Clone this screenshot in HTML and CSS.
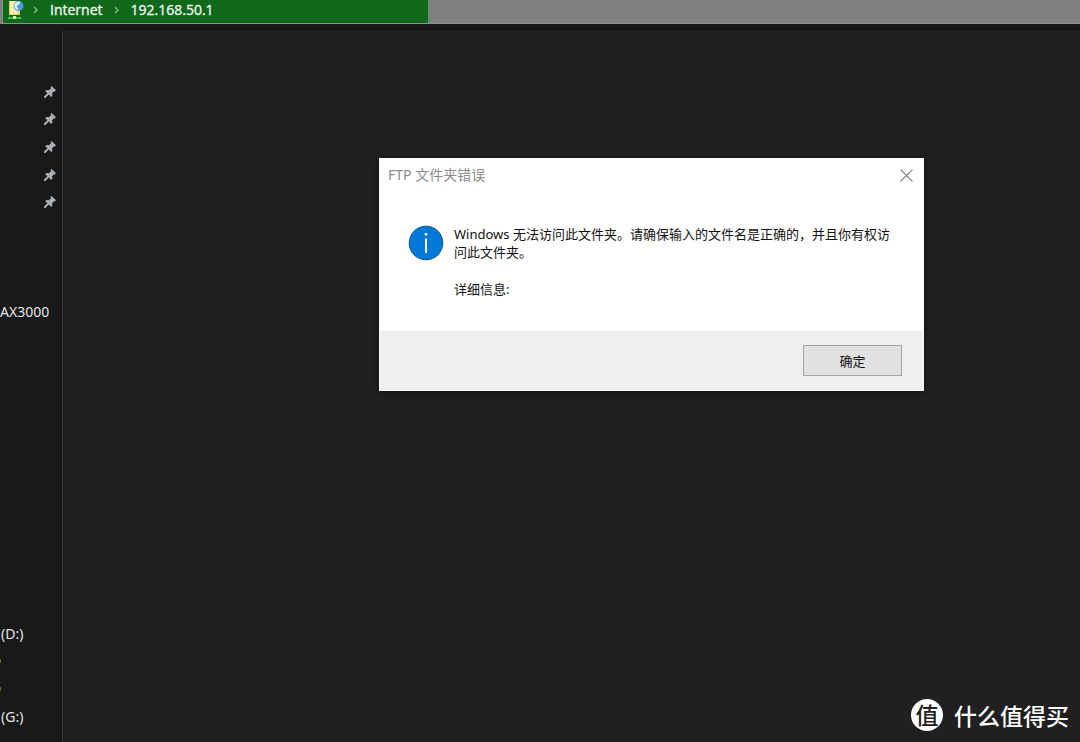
FILE: index.html
```html
<!DOCTYPE html>
<html lang="zh-CN">
<head>
<meta charset="utf-8">
<title>FTP 文件夹错误</title>
<link rel="stylesheet" href="styles.css">
</head>
<body>
<svg class="defs" aria-hidden="true">
  <symbol id="pin" viewBox="0 0 14 14">
    <path d="M8.6 1 13 5.2 11.8 6.4 11 6.2 9 8.4 9.4 10.8 8.2 12 5.8 9.6 2.4 13 1 13 1 11.6 4.4 8.2 2.2 6.2 3.4 4.9 5.8 5.2 8 3.2 7.6 2Z"/>
  </symbol>
  <symbol id="chevron" viewBox="0 0 8 10">
    <path d="M2 2 5 5 2 8"/>
  </symbol>
</svg>
<div class="window">
  <header class="address">
    <nav class="path" aria-label="地址">
      <svg class="site-icon" viewBox="0 0 18 20" aria-hidden="true">
        <path fill="#e8cf67" d="M1 1h11v14H1z"/>
        <path fill="#fff0a5" d="M2 1h8v13H2z"/>
        <circle cx="10.500" cy="6" r="5" fill="#4c9bd8"/>
        <path fill="#d8effc" d="M6.500 4c2-3 5-3 6-2l-2 3-2 1 2 3-1 1C7.500 9 5.500 7 6.500 4z"/>
        <path stroke="#49d651" stroke-width="1.600" d="M0 18h13"/>
        <path fill="#d3f4b2" d="M5 16h3v3H5z"/>
      </svg>
      <svg class="chevron"><use href="#chevron"/></svg>
      <a class="crumb" href="#">Internet</a>
      <svg class="chevron"><use href="#chevron"/></svg>
      <a class="crumb" href="#">192.168.50.1</a>
    </nav>
  </header>
  <div class="body">
    <aside class="sidebar">
      <ul class="pins">
        <li><svg class="pin"><use href="#pin"/></svg></li>
        <li><svg class="pin"><use href="#pin"/></svg></li>
        <li><svg class="pin"><use href="#pin"/></svg></li>
        <li><svg class="pin"><use href="#pin"/></svg></li>
        <li><svg class="pin"><use href="#pin"/></svg></li>
      </ul>
      <div class="device">AX3000</div>
      <ul class="drives">
        <li>(D:)</li>
        <li><span class="speck"></span></li>
        <li><span class="speck"></span></li>
        <li>(G:)</li>
      </ul>
    </aside>
    <main class="content">
      <footer class="brand">
        <span class="brand-mark">值</span>
        <span>什么值得买</span>
      </footer>
    </main>
  </div>
  <section class="dialog" role="dialog" aria-labelledby="dialog-title">
    <header class="dialog-head">
      <h1 class="dialog-title" id="dialog-title">FTP 文件夹错误</h1>
      <button class="close" type="button" aria-label="关闭">
        <svg viewBox="0 0 12 12"><path d="M.5.5l11 11M11.5.5l-11 11"/></svg>
      </button>
    </header>
    <div class="dialog-body">
      <svg class="info" viewBox="0 0 36 36" aria-hidden="true">
        <circle cx="18" cy="18" r="16.8" fill="#0078d7" stroke="#075391"/>
        <path fill="#fff" d="M17 13.5h2V28h-2zM16.7 8h2.6v2.6h-2.6z"/>
      </svg>
      <div class="message">
        <p>Windows 无法访问此文件夹。请确保输入的文件名是正确的，并且你有权访<br>问此文件夹。</p>
        <p>详细信息:</p>
      </div>
    </div>
    <footer class="dialog-foot">
      <button class="ok" type="button">确定</button>
    </footer>
  </section>
</div>
</body>
</html>
```

FILE: styles.css
```css
* {
  box-sizing: border-box;
}

body {
  margin: 0;
  background: #191919;
  color: #e4e4e4;
  font-family: "Noto Sans", "Noto Sans CJK SC", sans-serif;
  font-size: 14px;
}

ul,
p,
h1 {
  margin: 0;
  padding: 0;
  list-style: none;
}

.defs {
  position: absolute;
  width: 0;
  height: 0;
}

.window {
  position: relative;
  display: flex;
  flex-direction: column;
  min-height: 100vh;
}

.address {
  height: 24px;
  background: #808080;
  border-bottom: 1px solid #909090;
  margin-bottom: 7px;
}

.path {
  display: flex;
  align-items: center;
  width: 427px;
  max-width: 100%;
  height: 23px;
  margin-left: 2px;
  padding: 0 0 3px 5px;
  background: #10691b;
  border-left: 1px solid #8c948c;
  border-right: 1px solid #62966a;
}

.site-icon {
  width: 18px;
  height: 20px;
  margin-right: 6px;
}

.chevron {
  width: 8px;
  height: 10px;
  fill: none;
  stroke: #8fb591;
  stroke-width: 1.4;
}

.crumb {
  margin: 0 10px;
  color: #f2f8f2;
  font-family: "Open Sans", sans-serif;
  font-size: 14px;
  font-weight: 500;
  line-height: 20px;
  text-decoration: none;
  -webkit-text-stroke: 0.3px #f2f8f2;
}

.body {
  display: flex;
  flex: 1;
}

.sidebar {
  display: flex;
  flex-direction: column;
  width: 63px;
  padding: 47px 0 12px;
  border-right: 1px solid #333;
}

.pins {
  display: grid;
  grid-template-rows: repeat(5, 1fr);
  height: 138px;
}

.pins li {
  display: flex;
  align-items: center;
  justify-content: flex-end;
  padding-right: 5px;
}

.pin {
  width: 14px;
  height: 14px;
  fill: #a9b1b8;
}

.device {
  margin-top: 82px;
  line-height: 28px;
}

.drives {
  display: grid;
  grid-template-rows: repeat(4, 1fr);
  height: 110px;
  margin-top: auto;
}

.drives li {
  display: flex;
  align-items: center;
  padding-left: 1px;
}

.speck {
  width: 1px;
  height: 4px;
  margin-left: -1px;
  background: #756027;
}

.content {
  display: flex;
  flex: 1;
  align-items: flex-end;
  justify-content: flex-end;
  padding: 0 11px 11px;
  background: #202020;
}

.brand {
  display: flex;
  align-items: center;
  gap: 11px;
  color: #fff;
  font-family: "Noto Sans CJK SC", sans-serif;
  font-size: 23px;
  font-weight: 500;
  line-height: 30px;
}

.brand-mark {
  width: 32px;
  height: 32px;
  border-radius: 50%;
  background: #fff;
  color: #202020;
  font-size: 23px;
  font-style: oblique 8deg;
  line-height: 30px;
  text-align: center;
}

.dialog {
  position: absolute;
  top: 158px;
  left: 379px;
  width: 545px;
  border: 1px solid #f8f8f8;
  background: #fff;
  color: #111;
  box-shadow: 0 1px 6px #0008;
  font-size: 13px;
}

.dialog-head {
  display: flex;
  align-items: center;
  justify-content: space-between;
  height: 32px;
  padding: 0 10px 0 8px;
}

.dialog-title {
  color: #8c8c8c;
  font-size: 14px;
  font-weight: 400;
  line-height: 20px;
}

.close {
  display: flex;
  padding: 0;
  border: 0;
  background: none;
}

.close svg {
  width: 13px;
  height: 13px;
  fill: none;
  stroke: #777;
}

.dialog-body {
  display: flex;
  gap: 10px;
  padding: 34px 0 33px 28px;
}

.info {
  flex: none;
  width: 36px;
  height: 36px;
}

.message {
  display: grid;
  gap: 19px;
  line-height: 18px;
  white-space: nowrap;
}

.dialog-foot {
  display: flex;
  justify-content: flex-end;
  padding: 14px 21px;
  background: #efefef;
}

.ok {
  width: 99px;
  height: 31px;
  padding: 0;
  border: 1px solid #a5a5a5;
  background: #e1e1e1;
  color: #111;
  font-family: "Noto Sans CJK SC", sans-serif;
  font-size: 13px;
}
```
